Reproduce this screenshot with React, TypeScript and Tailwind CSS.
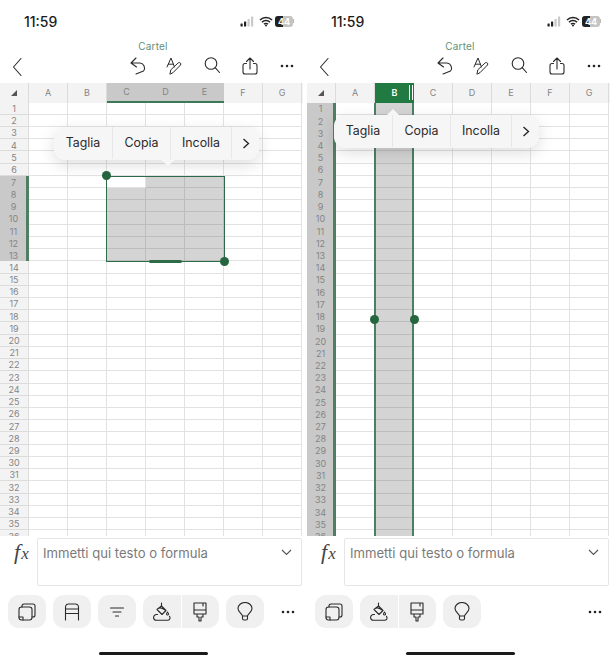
import React from "react";

const COLS = ["A", "B", "C", "D", "E", "F", "G"];
const ROWS = Array.from({ length: 36 }, (_, i) => i + 1);
const S = { fill: "none", stroke: "#2a2a2a", strokeWidth: 1.1, strokeLinecap: "round" as const, strokeLinejoin: "round" as const };

function Status() {
  return (
    <div className="flex h-[42px] items-center justify-between pl-[24px] pr-[9px]">
      <span className="text-[14px] font-medium text-[#1c1c1c]">11:59</span>
      <div className="flex items-center">
        <svg width="14" height="11" viewBox="0 0 14 11">
          <rect x="0.5" y="7.5" width="2.2" height="3" rx="0.5" fill="#222" />
          <rect x="4" y="5.5" width="2.2" height="5" rx="0.5" fill="#222" />
          <rect x="7.5" y="3" width="2.2" height="7.5" rx="0.5" fill="#c9c9c9" />
          <rect x="11" y="0.5" width="2.2" height="10" rx="0.5" fill="#c9c9c9" />
        </svg>
        <svg className="ml-[5px]" width="14" height="11" viewBox="0 0 14 11">
          <path d="M1 4a8.5 8.5 0 0 1 12 0M3 6.2a5.6 5.6 0 0 1 8 0M5 8.3a2.8 2.8 0 0 1 4 0" fill="none" stroke="#222" strokeWidth="1.6" />
          <path d="M7 10.8 5.8 9.4a1.7 1.7 0 0 1 2.4 0Z" fill="#222" />
        </svg>
        <div className="ml-[2px] flex items-center">
          <div className="relative flex h-[11px] w-[18px] items-center overflow-hidden rounded-[3px] bg-[#c4c4c4]">
            <div className="h-full w-[8px] bg-[#222]" />
            <span className="absolute inset-0 text-center text-[9px] font-bold leading-[11px] text-white">44</span>
          </div>
          <div className="h-[4px] w-[1px] bg-[#bbb]" />
        </div>
      </div>
    </div>
  );
}

function TopBar() {
  return (
    <div className="flex h-[41px] flex-col">
      <div className="h-[14px] pl-[3px] text-center text-[10px] leading-[8px] tracking-[0.2px] text-[#5f8f76]">Cartel</div>
      <div className="flex h-[27px] items-start">
        <svg className="ml-[11px] mt-[1px]" width="12" height="20" viewBox="0 0 12 20">
          <path d="M10 1.500 2.500 10l7.500 8.500" {...S} />
        </svg>
        <svg className="ml-[105px]" width="20" height="20" viewBox="0 0 20 20">
          <path d="M8 2 3 7l5.500 4M3 7h9a5 5 0 0 1 3.500 8L8 18" {...S} />
        </svg>
        <svg className="ml-[16px]" width="20" height="20" viewBox="0 0 20 20">
          <path d="M3 11 7 2l3.500 9M4.300 8.200h5M6 17.800l.8-4 7.500-7c1.300-1 3.300.7 2.200 2.200l-7.200 7.400Z" {...S} strokeWidth={1} />
        </svg>
        <svg className="ml-[17px]" width="20" height="20" viewBox="0 0 20 20">
          <circle cx="10" cy="7.500" r="5.800" {...S} />
          <path d="m14.200 11.700 4.300 4.800" {...S} />
        </svg>
        <svg className="ml-[17px]" width="20" height="20" viewBox="0 0 20 20">
          <path d="M12 13V2M8.500 5.500 12 2l3.500 3.500M8.500 7.500H7a2 2 0 0 0-2 2V16a2 2 0 0 0 2 2h10a2 2 0 0 0 2-2V9.500a2 2 0 0 0-2-2h-1.500" {...S} />
        </svg>
        <Dots className="ml-[22px] mt-[8px]" />
      </div>
    </div>
  );
}

function Dots({ className = "" }: { className?: string }) {
  return (
    <svg className={className} width="14" height="4" viewBox="0 0 14 4">
      <circle cx="2" cy="2" r="1.300" fill="#222" />
      <circle cx="7" cy="2" r="1.300" fill="#222" />
      <circle cx="12" cy="2" r="1.300" fill="#222" />
    </svg>
  );
}

function Handle({ className }: { className: string }) {
  return <div className={"absolute h-[9px] w-[9px] rounded-full bg-[#25663f] " + className} />;
}

function Popover({ className, children }: { className: string; children?: React.ReactNode }) {
  return (
    <div className={"absolute flex h-[33px] w-[205px] items-center rounded-[11px] bg-[#f6f6f6] pb-[1px] text-[12.400px] text-[#2b2b2b] shadow-[0_5px_16px_rgba(0,0,0,0.13)] " + className}>
      {children}
      <div className="flex h-full w-[59px] items-center justify-center border-r border-[#e8e8e8]">Taglia</div>
      <div className="flex h-full w-[58px] items-center justify-center border-r border-[#e8e8e8]">Copia</div>
      <div className="flex h-full w-[61px] items-center justify-center border-r border-[#e8e8e8]">Incolla</div>
      <div className="flex flex-1 items-center justify-center">
        <svg width="8" height="11" viewBox="0 0 8 11">
          <path d="m1.500 1 5 4.500-5 4.500" fill="none" stroke="#222" strokeWidth="1.300" />
        </svg>
      </div>
    </div>
  );
}

function Grid({ mode }: { mode: "range" | "column" }) {
  const isColHead = (c: string) => (mode === "range" ? c === "C" || c === "D" || c === "E" : false);
  const rowSel = (r: number) => (mode === "range" ? r >= 7 && r <= 13 : true);
  const cellSel = (r: number, c: string) =>
    mode === "range" ? r >= 7 && r <= 13 && "CDE".includes(c) && !(r === 7 && c === "C") : c === "B";
  return (
    <div className="relative h-[453px] overflow-hidden bg-white text-[9px] text-[#858585]">
      <div className="flex h-[19.500px] bg-[#f3f3f3]">
        <div className="flex w-[29px] items-center justify-center border-r border-[#dcdcdc]">
          <svg width="6" height="6" viewBox="0 0 6 6"><path d="M6 0v6H0Z" fill="#555" /></svg>
        </div>
        {COLS.map((c) =>
          mode === "column" && c === "B" ? (
            <div key={c} className="relative flex w-[39px] items-center justify-center bg-[#217a42] font-semibold text-white">
              {c}
              <div className="absolute right-[1.500px] top-[2px] h-[15px] w-[4px] border-x border-white" />
            </div>
          ) : (
            <div
              key={c}
              className={
                "flex w-[39px] items-center justify-center " +
                (isColHead(c) ? "border-b-2 border-[#3c7a57] bg-[#c9c9c9]" : "border-r border-[#dcdcdc]")
              }
            >
              {c}
            </div>
          ),
        )}
      </div>
      {ROWS.map((r) => (
        <div key={r} className="flex h-[12.220px]">
          <div
            className={
              "flex w-[29px] items-center justify-center pt-[1px] " +
              (rowSel(r)
                ? "bg-[#c9c9c9] pr-[2px] shadow-[inset_-3px_0_0_#4f7f63]"
                : "border-b border-r border-[#dcdcdc] bg-[#f3f3f3]")
            }
          >
            {r}
          </div>
          {COLS.map((c) => (
            <div
              key={c}
              className={
                "w-[39px] border-b border-r " +
                (cellSel(r, c) ? "border-[#bcbcbc] bg-[#d4d4d4]" : "border-[#e2e2e2]")
              }
            />
          ))}
        </div>
      ))}
      {mode === "range" ? (
        <>
          <div className="absolute left-[106px] top-[92.500px] h-[86px] w-[118.500px] border-[1.500px] border-[#2f6b48]" />
          <Handle className="left-[102px] top-[88px]" />
          <Handle className="left-[219.500px] top-[174px]" />
          <div className="absolute left-[149px] top-[177px] h-[2.500px] w-[33px] rounded-full bg-[#2f6b48]" />
          <Popover className="left-[54px] top-[44px]">
            <div className="absolute left-[107px] top-[33px] h-0 w-0 border-x-[7px] border-t-[6px] border-x-transparent border-t-[#f6f6f6]" />
          </Popover>
        </>
      ) : (
        <>
          <div className="absolute left-[67px] top-[19.500px] h-[434px] w-[40px] border-x-2 border-[#4a8062]" />
          <Handle className="left-[63px] top-[231.500px]" />
          <Handle className="left-[102.500px] top-[231.500px]" />
          <Popover className="left-[27px] top-[32px]">
            <div className="absolute left-[53px] top-[-6px] h-0 w-0 border-x-[6px] border-b-[6px] border-x-transparent border-b-[#f6f6f6]" />
          </Popover>
        </>
      )}
    </div>
  );
}

function Formula() {
  return (
    <div className="flex h-[59px] items-start pl-[14px] pr-[1px] pt-[2px]">
      <div className="flex w-[23px] items-baseline pt-[3px] font-['Liberation_Serif',serif] italic leading-[22px] text-[#444]">
        <span className="text-[22px]">f</span>
        <span className="ml-[1px] text-[17px]">x</span>
      </div>
      <div className="flex h-[48px] flex-1 items-start justify-between rounded-[2px] border border-[#e6e6e6] pl-[5px] pr-[9px] pt-[6px]">
        <span className="text-[13.100px] leading-[16px] text-[#7a7a7a]">Immetti qui testo o formula</span>
        <svg className="mt-[4px]" width="11" height="7" viewBox="0 0 11 7">
          <path d="m1 1 4.500 4.500L10 1" fill="none" stroke="#555" strokeWidth="1.100" />
        </svg>
      </div>
    </div>
  );
}

const CopyIcon = () => (
  <svg width="18" height="18" viewBox="0 0 18 18">
    <rect x="1" y="4" width="13" height="13" rx="2.500" {...S} />
    <path d="M4 4V3a2 2 0 0 1 2-2h9a2 2 0 0 1 2 2v9a2 2 0 0 1-2 2h-1M1 14h4v3" {...S} />
  </svg>
);
const FreezeIcon = () => (
  <svg width="18" height="18" viewBox="0 0 18 18">
    <path d="M2.500 17V4a3 3 0 0 1 3-3h7a3 3 0 0 1 3 3v13M2.500 6h13M2.500 10.500h13" {...S} />
  </svg>
);
const FilterIcon = () => (
  <svg width="18" height="18" viewBox="0 0 18 18">
    <path d="M2.500 5h13M5 9h8M7.500 13h3" {...S} />
  </svg>
);
const FillIcon = () => (
  <svg width="18" height="20" viewBox="0 0 18 20">
    <path d="M4.500 12.500H3.500a2.800 2.800 0 0 0 0 5.800h11a2.500 2.500 0 0 0 2-4" {...S} />
    <path d="M4 7.500 8.500 4l4.500 4.500-4 4ZM4.500 7c1-1 3-1.500 5-.5l3.500 2M8.500 1v3" {...S} />
    <path d="M14.500 10c.8 1 1.300 1.800 1 2.500-.5.800-2 .600-2-.5 0-.7.500-1.300 1-2Z" {...S} />
  </svg>
);
const BrushIcon = () => (
  <svg width="16" height="20" viewBox="0 0 16 20">
    <path d="M2 1h12v11H2ZM2 8h12M5 12v3h2v4h2v-4h2v-3M11 1v3" {...S} />
  </svg>
);
const BulbIcon = () => (
  <svg width="16" height="20" viewBox="0 0 16 20">
    <path d="M5.500 14c0-2-4.500-4-4.500-7.500a7 6 0 0 1 14 0C15 10 10.500 12 10.500 14ZM5.500 14v2.500a1.500 1.500 0 0 0 1.500 1.500h2a1.500 1.500 0 0 0 1.500-1.500V14" {...S} />
  </svg>
);

function Btn({ children }: { children: React.ReactNode }) {
  return <div className="flex h-[33px] w-[38px] items-center justify-center rounded-[11px] bg-[#f0f0f0]">{children}</div>;
}

function Split() {
  return (
    <div className="flex h-[33px] w-[76px] overflow-hidden rounded-[11px]">
      <div className="flex flex-1 items-center justify-center border-r border-white bg-[#f0f0f0]"><FillIcon /></div>
      <div className="flex flex-1 items-center justify-center bg-[#f0f0f0]"><BrushIcon /></div>
    </div>
  );
}

function Phone({ mode }: { mode: "range" | "column" }) {
  return (
    <div className="flex h-[660px] w-[303px] flex-col">
      <Status />
      <TopBar />
      <Grid mode={mode} />
      <Formula />
      <div className="flex h-[33px] items-center gap-[7px] pl-[8px] pr-[8px]">
        <Btn><CopyIcon /></Btn>
        {mode === "range" && <Btn><FreezeIcon /></Btn>}
        {mode === "range" && <Btn><FilterIcon /></Btn>}
        <Split />
        <Btn><BulbIcon /></Btn>
        <Dots className="ml-auto" />
      </div>
      <div className="flex flex-1 items-start justify-center pl-[4px] pt-[24px]">
        <div className="h-[3px] w-[109px] rounded-full bg-[#1a1a1a]" />
      </div>
    </div>
  );
}

export default function App() {
  return (
    <div className="flex h-[660px] w-[610px] gap-[4px] overflow-hidden bg-white font-['Inter',sans-serif]">
      <Phone mode="range" />
      <Phone mode="column" />
    </div>
  );
}
